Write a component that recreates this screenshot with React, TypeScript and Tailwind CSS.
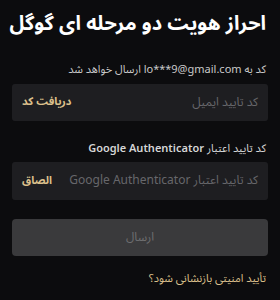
export default function App() {
  const font = { fontFamily: '"Noto Sans Arabic", "Vazirmatn", "DejaVu Sans", sans-serif' };
  return (
    <div dir="rtl" style={font} className="w-[280px] h-[300px] bg-[#0c0c0e] px-3 pt-[7px] overflow-hidden">
      <h1 className="text-[20px] font-bold text-white leading-[34px] pr-[2px] whitespace-nowrap">احراز هویت دو مرحله ای گوگل</h1>
      <div className="mt-[21px] text-[11px] text-[#c9c9c9] leading-[16px] pr-[2px] whitespace-nowrap">
        کد به <span dir="ltr">lo***9@gmail.com</span> ارسال خواهد شد
      </div>
      <div className="mt-[6px] h-[37px] rounded-[3px] bg-[#1e1e21] flex items-center justify-between px-[10px]">
        <span className="text-[12px] text-[#67676b]">کد تایید ایمیل</span>
        <span className="text-[11px] font-bold text-[#dcc08c]">دریافت کد</span>
      </div>
      <div className="mt-[20px] text-[11px] text-[#d6d6d6] leading-[16px] pr-[2px] whitespace-nowrap">
        کد تایید اعتبار <span dir="ltr" className="font-semibold">Google Authenticator</span>
      </div>
      <div className="mt-[5px] h-[38px] rounded-[3px] bg-[#1e1e21] flex items-center justify-between px-[10px]">
        <span className="text-[12px] text-[#67676b] whitespace-nowrap">کد تایید اعتبار <span dir="ltr">Google Authenticator</span></span>
        <span className="text-[11px] font-bold text-[#dcc08c]">الصاق</span>
      </div>
      <button className="mt-[19px] w-full h-[37px] rounded-[4px] bg-[#3a3a3c] text-[12px] text-[#6e6e70]">ارسال</button>
      <div className="mt-[15px] text-[11px] text-[#dcc08c] leading-[16px] pr-[2px]">تأیید امنیتی بازنشانی شود؟</div>
    </div>
  );
}
